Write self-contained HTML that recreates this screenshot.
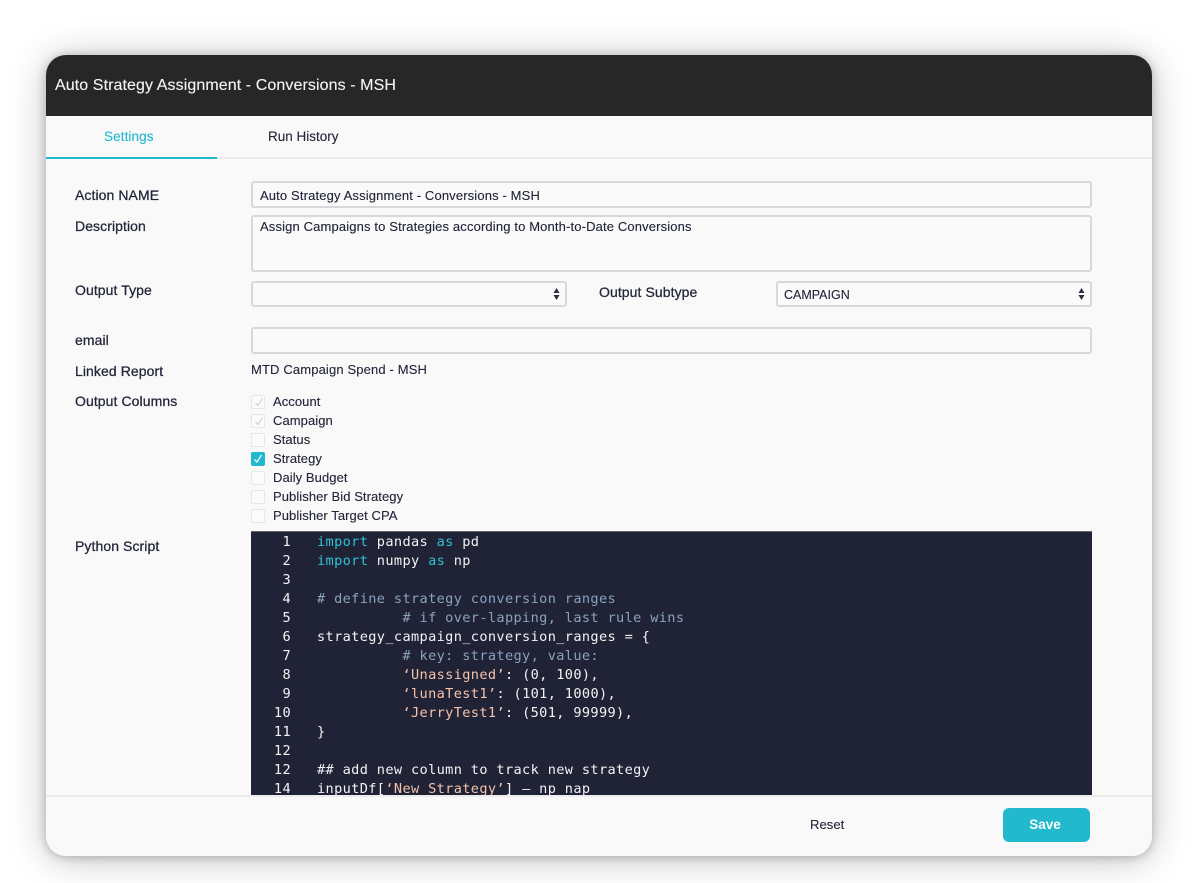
<!DOCTYPE html>
<html><head><meta charset="utf-8"><style>
html,body{margin:0;padding:0;width:1200px;height:883px;background:#fff;overflow:hidden}
body{font-family:"Liberation Sans",sans-serif;color:#22243a;font-size:13px;position:relative}
#card{position:absolute;left:46px;top:55px;width:1106px;height:801px;border-radius:20px;background:#f9f9f9;box-shadow:0 1px 10px rgba(0,0,0,.24),0 3px 38px rgba(0,0,0,.24)}
#clip{position:absolute;inset:0;border-radius:20px;overflow:hidden}
.a{position:absolute;white-space:nowrap;line-height:16px;-webkit-text-stroke:.12px currentColor}
.box{position:absolute;box-sizing:border-box;border:2px solid #d6d9d9;border-radius:3px;background:#fafafa}
.lab{left:29px;font-size:14px;letter-spacing:.08px;-webkit-text-stroke:.25px currentColor}
.val{letter-spacing:.14px}
.cb{position:absolute;left:205px;width:14px;height:14px;box-sizing:border-box;border:1px solid #e6e6e6;border-radius:2px;background:#fbfbfb}
.cb svg{position:absolute;left:0;top:0}
.cl{left:227px;font-size:13px;letter-spacing:.07px}
#code{position:absolute;left:205px;top:476px;width:841px;height:265px;background:#202235;overflow:hidden;font-family:"DejaVu Sans Mono",monospace;font-size:13.6px;letter-spacing:.36px;line-height:19px;color:#f3f3f5;border-top:1px solid #666;box-sizing:border-box}
#code div{position:absolute;left:0;height:19px;white-space:pre}
.n{position:absolute;left:0;width:40px;text-align:right;letter-spacing:.36px}
.t{position:absolute;left:66px}
.k{color:#2fc0d6}.c{color:#8aa2bd}.s{color:#f5c3ac}
</style></head><body>
<div id="card"><div id="clip">
<div style="position:absolute;left:0;top:0;width:1106px;height:61px;background:#272727"></div>
<div class="a" style="left:9px;top:23px;color:#f4f4f4;font-size:16px;letter-spacing:.09px">Auto Strategy Assignment - Conversions - MSH</div>
<div class="a" style="left:58px;top:74px;color:#22b9ce;font-size:13.5px;letter-spacing:.1px">Settings</div>
<div class="a" style="left:222px;top:74px;font-size:13.5px">Run History</div>
<div style="position:absolute;left:0;top:102px;width:1106px;height:2px;background:#ececec"></div>
<div style="position:absolute;left:0;top:102px;width:171px;height:2px;background:#22b9ce"></div>

<div class="a lab" style="top:132px">Action NAME</div>
<div class="box" style="left:205px;top:126px;width:841px;height:27px"></div>
<div class="a val" style="left:214px;top:133px">Auto Strategy Assignment - Conversions - MSH</div>
<div class="a lab" style="top:163px">Description</div>
<div class="box" style="left:205px;top:160px;width:841px;height:57px"></div>
<div class="a val" style="left:214px;top:164px">Assign Campaigns to Strategies according to Month-to-Date Conversions</div>

<div class="a lab" style="top:227px">Output Type</div>
<div class="box" style="left:205px;top:226px;width:316px;height:26px"></div>
<svg style="position:absolute;left:506px;top:232px" width="9" height="14"><path d="M4.5 1L7.5 6H1.5zM4.5 13L1.5 8h6z" fill="#2a2c40"/></svg>
<div class="a lab" style="left:553px;top:229px">Output Subtype</div>
<div class="box" style="left:730px;top:226px;width:316px;height:26px"></div>
<div class="a" style="left:738px;top:232px;font-size:12.5px">CAMPAIGN</div>
<svg style="position:absolute;left:1031px;top:232px" width="9" height="14"><path d="M4.5 1L7.5 6H1.5zM4.5 13L1.5 8h6z" fill="#2a2c40"/></svg>

<div class="a lab" style="top:277px">email</div>
<div class="box" style="left:205px;top:272px;width:841px;height:27px"></div>
<div class="a lab" style="top:308px">Linked Report</div>
<div class="a val" style="left:205px;top:307px">MTD Campaign Spend - MSH</div>
<div class="a lab" style="top:338px">Output Columns</div>

<div class="cb" style="top:340px"><svg width="14" height="14"><path d="M3.5 7L6 9.5L10.5 2.5" fill="none" stroke="#c8c8c8" stroke-width="1"/></svg></div>
<div class="a cl" style="top:339px">Account</div>
<div class="cb" style="top:359px"><svg width="14" height="14"><path d="M3.5 7L6 9.5L10.5 2.5" fill="none" stroke="#c8c8c8" stroke-width="1"/></svg></div>
<div class="a cl" style="top:358px">Campaign</div>
<div class="cb" style="top:378px"></div>
<div class="a cl" style="top:377px">Status</div>
<div class="cb" style="top:397px;background:#22b9ce;border-color:#22b9ce"><svg width="14" height="14" style="left:-1px;top:-1px"><path d="M3.5 7.5L6 10L10.5 3" fill="none" stroke="#fff" stroke-width="1.2"/></svg></div>
<div class="a cl" style="top:396px">Strategy</div>
<div class="cb" style="top:416px"></div>
<div class="a cl" style="top:415px">Daily Budget</div>
<div class="cb" style="top:435px"></div>
<div class="a cl" style="top:434px">Publisher Bid Strategy</div>
<div class="cb" style="top:454px"></div>
<div class="a cl" style="top:453px">Publisher Target CPA</div>

<div class="a lab" style="top:483px">Python Script</div>
<div id="code">
<div style="top:1px"><span class="n">1</span><span class="t"><span class="k">import</span> pandas <span class="k">as</span> pd</span></div>
<div style="top:20px"><span class="n">2</span><span class="t"><span class="k">import</span> numpy <span class="k">as</span> np</span></div>
<div style="top:39px"><span class="n">3</span></div>
<div style="top:58px"><span class="n">4</span><span class="t c"># define strategy conversion ranges</span></div>
<div style="top:77px"><span class="n">5</span><span class="t c">          # if over-lapping, last rule wins</span></div>
<div style="top:96px"><span class="n">6</span><span class="t">strategy_campaign_conversion_ranges = {</span></div>
<div style="top:115px"><span class="n">7</span><span class="t c">          # key: strategy, value:</span></div>
<div style="top:134px"><span class="n">8</span><span class="t">          <span class="s">‘Unassigned’</span>: (0, 100),</span></div>
<div style="top:153px"><span class="n">9</span><span class="t">          <span class="s">‘lunaTest1’</span>: (101, 1000),</span></div>
<div style="top:172px"><span class="n">10</span><span class="t">          <span class="s">‘JerryTest1’</span>: (501, 99999),</span></div>
<div style="top:191px"><span class="n">11</span><span class="t">}</span></div>
<div style="top:210px"><span class="n">12</span></div>
<div style="top:229px"><span class="n">12</span><span class="t">## add new column to track new strategy</span></div>
<div style="top:248px"><span class="n">14</span><span class="t">inputDf[<span class="s">‘New Strategy’</span>] – np nap</span></div>
</div>

<div style="position:absolute;left:0;top:740px;width:1106px;height:61px;background:#f9f9f9;border-top:2px solid #ececec;box-sizing:border-box"></div>
<div class="a" style="left:764px;top:762px;font-size:13px;letter-spacing:.08px">Reset</div>
<div style="position:absolute;left:957px;top:753px;width:87px;height:34px;border-radius:6px;background:#22b9ce;color:#fff;font-weight:bold;font-size:13.5px;line-height:33px;text-align:center;padding-right:3px;box-sizing:border-box">Save</div>
</div></div>
</body></html>
